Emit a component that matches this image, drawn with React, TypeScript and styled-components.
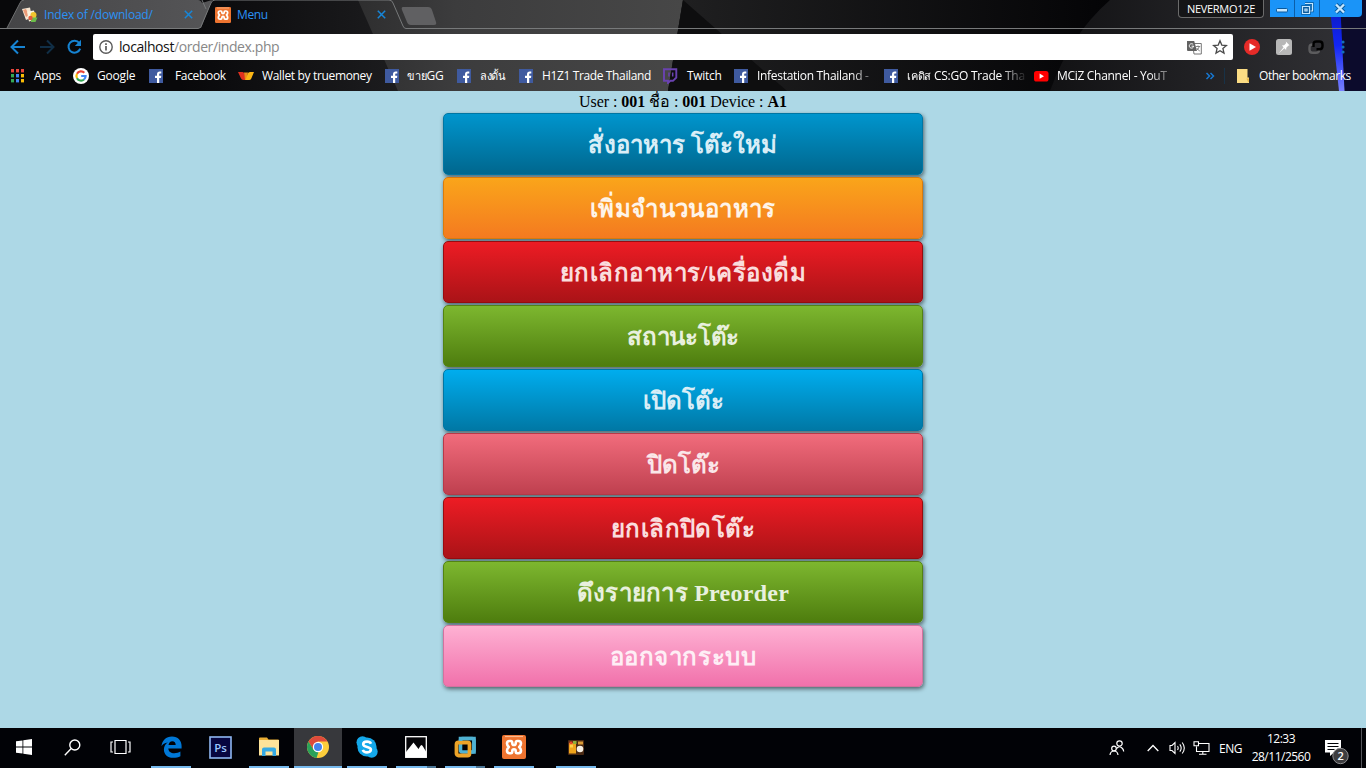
import React from "react";
import styled, { createGlobalStyle } from "styled-components";

const Global = createGlobalStyle`
  *, *::before, *::after { box-sizing: border-box; }
  body { margin: 0; background: #add8e6; overflow: hidden; }
`;

const UI = `"Open Sans", "Noto Sans", "Liberation Sans", sans-serif`;

const Screen = styled.div`
  width: 1366px;
  height: 768px;
  display: flex;
  flex-direction: column;
  overflow: hidden;
`;

/* ---------- browser frame ---------- */

const Browser = styled.header`
  position: relative;
  height: 91px;
  display: flex;
  flex-direction: column;
  background: #08080a;
  font-family: ${UI};
  font-size: 12px;
  color: #fff;
`;

const Backdrop = styled.svg`
  position: absolute;
  inset: 0;
`;

const TabStrip = styled.div`
  position: relative;
  height: 29px;
  display: flex;
`;

const Tab = styled.div<{ $w: number }>`
  width: ${(p) => p.$w}px;
  height: 29px;
  padding-left: 22px;
  display: flex;
  align-items: center;
  color: #2b92f5;
  & > svg:first-child { margin-right: 6px; }
`;

const TabTitle = styled.span<{ $ls?: number }>`
  flex: 1;
  line-height: 28px;
  white-space: nowrap;
  letter-spacing: ${(p) => p.$ls ?? 0}px;
`;

const WindowControls = styled.div`
  margin-left: auto;
  display: flex;
  align-items: flex-start;
  padding-right: 4px;
`;

const Profile = styled.div`
  width: 86px;
  height: 18px;
  margin-right: 6px;
  border: 1px solid #6b6b6b;
  border-top: 0;
  border-radius: 0 0 4px 4px;
  background: #151517;
  text-align: center;
  font-size: 11px;
  line-height: 18px;
  letter-spacing: -0.3px;
`;

const WindowButton = styled.div<{ $w: number }>`
  width: ${(p) => p.$w}px;
  height: 17px;
  display: flex;
  align-items: center;
  justify-content: center;
  background: #1a94f8;
  border-right: 1px solid #0b5ea8;
  &:last-child { border-right: 0; border-radius: 0 0 4px 0; }
`;

const Toolbar = styled.div`
  position: relative;
  height: 33px;
  display: flex;
  align-items: center;
  padding: 4px 8px 2px 9px;
`;

const NavIcon = styled.span<{ $w: number }>`
  width: ${(p) => p.$w}px;
  display: flex;
`;

const Omnibox = styled.div`
  width: 1140px;
  height: 26px;
  margin-top: 1px;
  padding: 0 5px;
  display: flex;
  align-items: center;
  background: #fff;
  border-radius: 2px;
  color: #888;
  font-size: 14px;
  & > svg:first-child { margin-right: 5px; }
`;

const Address = styled.span`
  flex: 1;
  line-height: 26px;
  letter-spacing: -0.41px;
  b { font-weight: 400; color: #111; }
`;

const Extensions = styled.div`
  flex: 1;
  padding-left: 11px;
  display: flex;
  align-items: center;
  gap: 16px;
`;

const BookmarkBar = styled.nav`
  position: relative;
  height: 28px;
  display: flex;
  align-items: center;
  padding-left: 10px;
`;

const Bookmark = styled.div<{ $w: number }>`
  width: ${(p) => p.$w}px;
  display: flex;
  align-items: center;
  flex: none;
`;

const BookmarkIcon = styled.span<{ $w: number }>`
  width: ${(p) => p.$w}px;
  height: 16px;
  flex: none;
`;

const BookmarkLabel = styled.span<{ $ls?: number; $fade?: number }>`
  white-space: nowrap;
  line-height: 28px;
  letter-spacing: ${(p) => p.$ls ?? 0}px;
  ${(p) =>
    p.$fade ? `mask-image: linear-gradient(90deg, #000 ${p.$fade - 26}px, rgba(0, 0, 0, 0.1) ${p.$fade}px);` : ""}
`;

const SmallThai = styled.span`
  font-size: 11px;
`;

/* ---------- page ---------- */

const Page = styled.main`
  height: 637px;
  background: #add8e6;
  display: flex;
  flex-direction: column;
  align-items: center;
  font-family: "Liberation Serif", serif;
`;

const UserLine = styled.div`
  height: 22px;
  line-height: 22px;
  font-size: 16px;
  letter-spacing: -0.05px;
  color: #000;
  white-space: nowrap;
`;

const Menu = styled.div`
  display: flex;
  flex-direction: column;
  gap: 2px;
`;

const MenuButton = styled.div<{ $from: string; $to: string; $edge: string; $text: string }>`
  width: 480px;
  height: 62px;
  padding-top: 2px;
  display: flex;
  align-items: center;
  justify-content: center;
  border: 1px solid ${(p) => p.$edge};
  border-radius: 5px;
  background: linear-gradient(${(p) => p.$from}, ${(p) => p.$to});
  box-shadow: 1px 2px 4px rgba(0, 0, 0, 0.55);
  color: ${(p) => p.$text};
`;

const MenuLabel = styled.span<{ $ls: number }>`
  font-size: 24px;
  font-weight: 700;
  line-height: 58px;
  letter-spacing: ${(p) => p.$ls}px;
  white-space: nowrap;
`;

/* ---------- taskbar ---------- */

const Taskbar = styled.footer`
  height: 40px;
  display: flex;
  background: #010206;
  font-family: ${UI};
  font-size: 12px;
  color: #fff;
`;

const Task = styled.div<{ $w?: number; $open?: boolean; $active?: boolean; $stack?: boolean; $ml?: number }>`
  width: ${(p) => p.$w ?? 49}px;
  margin-left: ${(p) => p.$ml ?? 0}px;
  height: 40px;
  padding-right: ${(p) => (p.$w ? 0 : 1)}px;
  display: grid;
  grid-template-rows: 38px 2px;
  justify-items: center;
  align-items: center;
  background: ${(p) => (p.$active ? "linear-gradient(90deg, #37383c 48px, transparent 48px)" : "none")};
  &::after {
    content: "";
    width: ${(p) => (p.$active ? 48 : 40)}px;
    height: 2px;
    background: ${(p) =>
      !p.$open ? "none" : p.$stack ? "linear-gradient(90deg, #76b9ed 31px, #4b7595 31px)" : "#76b9ed"};
  }
`;

const Tray = styled.div`
  margin-left: auto;
  display: flex;
  align-items: center;
`;

const TrayCell = styled.div<{ $w: number }>`
  width: ${(p) => p.$w}px;
  display: flex;
  justify-content: center;
  letter-spacing: -0.45px;
`;

const Clock = styled.div`
  width: 78px;
  text-align: center;
  line-height: 18px;
  letter-spacing: -0.5px;
  padding-bottom: 1px;
`;

const ShowDesktop = styled.div`
  width: 5px;
  height: 40px;
  border-left: 1px solid #53545a;
`;

/* ---------- icons ---------- */

const Xampp = ({ s }: { s: number }) => (
  <svg width={s} height={s} viewBox="0 0 24 24">
    <rect width="24" height="24" rx="2" fill="#ee7430" />
    <path d="M3 1.500h18" stroke="#fbb98c" strokeWidth="1.200" />
    <path
      d="M7.500 6H8.800Q10.300 6 10.300 8.200Q10.300 10 12 10Q13.700 10 13.700 8.200Q13.700 6 15.200 6H16.500Q19 6 19 8.600Q19 10.300 17.200 12Q19 13.700 19 15.600Q19 18.200 16.500 18.200H15.200Q13.700 18.200 13.700 16Q13.700 14.200 12 14.200Q10.300 14.200 10.300 16Q10.300 18.200 8.800 18.200H7.500Q5 18.200 5 15.600Q5 13.700 6.800 12Q5 10.300 5 8.600Q5 6 7.500 6z"
      fill="none"
      stroke="#fff"
      strokeWidth="2.600"
      strokeLinejoin="round"
    />
  </svg>
);

const Close = () => (
  <svg width="9" height="9" viewBox="0 0 9 9">
    <path d="M.8.8l7.4 7.4M8.2.8L.8 8.2" stroke="#1686d9" strokeWidth="1.5" />
  </svg>
);

const DownloadIcon = () => (
  <svg width="16" height="16" viewBox="0 0 16 16">
    <path d="M0 2l8-1.500 2 10-6 2.500z" fill="#f4e6d2" />
    <path d="M1 3l3-1 3 6-3 2z" fill="#ea9a78" />
    <path d="M5 4.500l7-1 2 9-7 2z" fill="#f8f2df" />
    <circle cx="11.500" cy="8" r="3" fill="#f0c52d" />
    <path d="M9 10.500h6.500l-2 4.500H9z" fill="#6cbc4a" />
    <circle cx="8.500" cy="11" r="2.200" fill="#e25a3c" />
  </svg>
);

const Facebook = () => (
  <svg width="14" height="14" viewBox="0 0 14 14" style={{ marginTop: 1 }}>
    <rect width="14" height="14" fill="#3f5a9f" />
    <path d="M8 14V9H6V6.800h2V5.200C8 3.300 9.100 2.400 10.700 2.400h1.600v2.100h-1.100c-.8 0-1 .4-1 1v1.300h2.100L12 9h-1.800v5z" fill="#fff" />
  </svg>
);

const AppsGrid = () => (
  <svg width="14" height="16" viewBox="0 0 14 16">
    {["#e8453c", "#e8453c", "#e8453c", "#34a853", "#4285f4", "#fbbc05", "#34a853", "#4285f4", "#fbbc05"].map((c, i) => (
      <rect key={i} x={1 + (i % 3) * 5} y={1 + Math.floor(i / 3) * 5} width="3" height="3.400" fill={c} />
    ))}
  </svg>
);

const Google = () => (
  <svg width="16" height="16" viewBox="0 0 16 16">
    <circle cx="8" cy="8" r="8" fill="#fff" />
    <g fill="none" strokeWidth="2.200">
      <path d="M11.300 4.700A4.600 4.600 0 0 0 4 5.800" stroke="#ea4335" />
      <path d="M4 5.800a4.600 4.600 0 0 0 0 4.400" stroke="#fbbc05" />
      <path d="M4 10.200a4.600 4.600 0 0 0 7 1.300" stroke="#34a853" />
      <path d="M11 11.500A4.600 4.600 0 0 0 12.600 8H8.200" stroke="#4285f4" />
    </g>
  </svg>
);

const TrueMoney = () => (
  <svg width="16" height="16" viewBox="0 0 16 16">
    <path d="M0 4h4.500q1.500 0 2 2l1 6H5.500Q3.500 12 2.800 10z" fill="#e2301f" />
    <path d="M6 4.500h4L8.500 12H7z" fill="#f08a1b" />
    <path d="M7.500 12l2.300-6.500Q10.300 4 12 4h4l-2.700 6.500Q12.600 12 11 12z" fill="#fbb615" />
  </svg>
);

const Twitch = () => (
  <svg width="16" height="16" viewBox="0 0 16 16">
    <path d="M2 1.300h12.300v8.200L11 12.800H8.300L6 15v-2.200H2z" fill="none" stroke="#6a42b0" strokeWidth="1.900" />
    <path d="M7 4.500v4M10.700 4.500v4" stroke="#6a42b0" strokeWidth="1.500" />
  </svg>
);

const YouTube = () => (
  <svg width="15" height="16" viewBox="0 0 15 16">
    <rect y="3" width="14.500" height="10.500" rx="2.600" fill="#f00" />
    <path d="M5.600 5.600v5.200l4.400-2.600z" fill="#fff" />
  </svg>
);

const Note = () => (
  <svg width="12" height="16" viewBox="0 0 12 16">
    <path d="M0 1h10.500v8.500H12V15H0z" fill="#fbdc84" />
    <path d="M9.500 10.500h2.500V14H11z" fill="#e9b949" />
  </svg>
);

const Theme = () => (
  <Backdrop width="1366" height="91" viewBox="0 0 1366 91">
    <defs>
      <linearGradient id="dim" x1="0" x2="1">
        <stop offset="0" stopColor="#08080a" />
        <stop offset="1" stopColor="#1d1d1f" />
      </linearGradient>
      <linearGradient id="mid" x1="0" x2="1">
        <stop offset="0" stopColor="#2e2e2f" />
        <stop offset=".3" stopColor="#3c3c3d" />
        <stop offset="1" stopColor="#474747" />
      </linearGradient>
      <linearGradient id="right" x1="0" x2="1">
        <stop offset="0" stopColor="#202021" />
        <stop offset="1" stopColor="#040406" />
      </linearGradient>
      <linearGradient id="far" x1="0" x2="1">
        <stop offset="0" stopColor="#121214" />
        <stop offset="1" stopColor="#303034" />
      </linearGradient>
      <linearGradient id="tab" x1="0" x2="1">
        <stop offset="0" stopColor="#454547" />
        <stop offset="1" stopColor="#555557" />
      </linearGradient>
      <linearGradient id="beam" x1="0" x2="0" y1="0" y2="1">
        <stop offset="0" stopColor="#0a18b8" />
        <stop offset=".5" stopColor="#1226f4" />
        <stop offset="1" stopColor="#7880ff" />
      </linearGradient>
    </defs>
    <path d="M180 0H372L405 91H180z" fill="url(#dim)" />
    <path d="M358 0H683L668 91H398z" fill="url(#mid)" />
    <path d="M683 0H1110L1050 91H668z" fill="url(#right)" />
    <path d="M683 0L787 91H668z" fill="#0e0e0f" />
    <path d="M1110 0H1330L1345 91H1050Q1070 35 1110 0z" fill="url(#far)" />
    <path d="M1330 0H1366V91H1345z" fill="#0c0b2c" />
    <path d="M1329 0H1340L1344.500 91H1339z" fill="url(#beam)" />
    <path d="M7 28L20 3q1-3 4-3H198q3 0 4 3L212 0L201 28z" fill="url(#tab)" />
    <path d="M0 28.500H198q2 0 3-2L211 3q1-3 4-3H389q3 0 4 3L403 26q1 2.500 3 2.500H1366" fill="none" stroke="#77797a" />
    <path d="M7 28L20 3q1-3 4-3" fill="none" stroke="#6c6d6e" />
    <path d="M202 0L206 9" stroke="#77797a" />
    <path d="M403 7H428q3 0 4 3l4 12q1 3-2 3H411q-3 0-4-3L402 10q-1-3 1-3z" fill="#606062" />
  </Backdrop>
);

type Mark = { w: number; iw: number; icon: React.ReactNode; thai?: string; label: string; ls: number; fade?: number };
const bookmarks: Mark[] = [
  { w: 63, iw: 24, icon: <AppsGrid />, label: "Apps", ls: -0.25 },
  { w: 76, iw: 24, icon: <Google />, label: "Google", ls: -0.2 },
  { w: 89, iw: 26, icon: <Facebook />, label: "Facebook", ls: -0.33 },
  { w: 147, iw: 24, icon: <TrueMoney />, label: "Wallet by truemoney", ls: -0.34 },
  { w: 72, iw: 22, icon: <Facebook />, thai: "ขาย", label: "GG", ls: -0.2 },
  { w: 62, iw: 23, icon: <Facebook />, thai: "ลงดั้น", label: "", ls: -0.4 },
  { w: 143, iw: 23, icon: <Facebook />, label: "H1Z1 Trade Thailand", ls: -0.37 },
  { w: 72, iw: 25, icon: <Twitch />, label: "Twitch", ls: -0.3 },
  { w: 150, iw: 23, icon: <Facebook />, label: "Infestation Thailand -", ls: -0.3, fade: 120 },
  { w: 150, iw: 23, icon: <Facebook />, thai: "เคดิส", label: " CS:GO Trade Tha", ls: -0.24, fade: 118 },
  { w: 171, iw: 23, icon: <YouTube />, label: "MCiZ Channel - YouT", ls: -0.3, fade: 118 },
];

type Item = { label: string; from: string; to: string; edge: string; text: string; ls?: number };
const red = { from: "#ed1c24", to: "#aa1317", edge: "#980c10", text: "#fadddd" };
const green = { from: "#7db72f", to: "#4e7d0e", edge: "#538312", text: "#e8f0de" };
const items: Item[] = [
  { label: "สั่งอาหาร โต๊ะใหม่", from: "#0095cd", to: "#00678e", edge: "#0076a3", text: "#d9eef7", ls: 0.08 },
  { label: "เพิ่มจำนวนอาหาร", from: "#faa51a", to: "#f47a20", edge: "#da7c0c", text: "#fef4e9", ls: 0.4 },
  { label: "ยกเลิกอาหาร/เครื่องดื่ม", ...red, ls: 0.5 },
  { label: "สถานะโต๊ะ", ...green, ls: -0.25 },
  { label: "เปิดโต๊ะ", from: "#00adee", to: "#0078a5", edge: "#0076a3", text: "#d9eef7" },
  { label: "ปิดโต๊ะ", from: "#f16c7c", to: "#bf404f", edge: "#b73948", text: "#fae7e9" },
  { label: "ยกเลิกปิดโต๊ะ", ...red, ls: 0.45 },
  { label: "ดึงรายการ Preorder", ...green, ls: 0.25 },
  { label: "ออกจากระบบ", from: "#feb1d3", to: "#f171ab", edge: "#d2729e", text: "#feeef5", ls: 0.6 },
];

export default function App() {
  return (
    <Screen>
      <Global />
      <Browser>
        <Theme />
        <TabStrip>
          <Tab $w={193}>
            <DownloadIcon />
            <TabTitle $ls={-0.22}>Index of /download/</TabTitle>
            <Close />
          </Tab>
          <Tab $w={193}>
            <Xampp s={16} />
            <TabTitle $ls={-0.4}>Menu</TabTitle>
            <Close />
          </Tab>
          <WindowControls>
            <Profile>NEVERMO12E</Profile>
            <WindowButton $w={25}>
              <svg width="12" height="5" style={{ marginTop: 3 }}>
                <rect x=".5" y=".5" width="11" height="3.500" rx="1" fill="#c5e7ff" stroke="#08599c" />
              </svg>
            </WindowButton>
            <WindowButton $w={25}>
              <svg width="13" height="13" viewBox="0 0 13 13" fill="none">
                <path d="M4 1.500h7.500V9H9.500M1.500 4.500h7v7h-7zM4 7h2v2H4z" stroke="#08599c" strokeWidth="2.600" />
                <path d="M4 1.500h7.500V9H9.500M1.500 4.500h7v7h-7zM4 7h2v2H4z" stroke="#c5e7ff" strokeWidth="1.200" />
              </svg>
            </WindowButton>
            <WindowButton $w={42}>
              <svg width="12" height="11" viewBox="0 0 12 11" style={{ marginRight: 2 }}>
                <path d="M2 1.500l8 8M10 1.500l-8 8" stroke="#08599c" strokeWidth="4.200" />
                <path d="M2 1.500l8 8M10 1.500l-8 8" stroke="#c5e7ff" strokeWidth="2.400" />
              </svg>
            </WindowButton>
          </WindowControls>
        </TabStrip>

        <Toolbar>
          <NavIcon $w={29}>
            <svg width="18" height="16" viewBox="0 0 18 16" fill="none" stroke="#1683d2" strokeWidth="2">
              <path d="M16 8H3.500M9 1.500L2.500 8 9 14.500" />
            </svg>
          </NavIcon>
          <NavIcon $w={28}>
            <svg width="18" height="16" viewBox="0 0 18 16" fill="none" stroke="#102e46" strokeWidth="2">
              <path d="M2 8h12.500M9 1.500L15.500 8 9 14.500" />
            </svg>
          </NavIcon>
          <NavIcon $w={27}>
            <svg width="17" height="16" viewBox="0 0 17 16">
              <path d="M13.300 4A6 6 0 1 0 14.200 9.700" fill="none" stroke="#1683d2" strokeWidth="2" />
              <path d="M15 .8v6.200H8.800z" fill="#1683d2" />
            </svg>
          </NavIcon>
          <Omnibox>
            <svg width="16" height="16" viewBox="0 0 16 16">
              <circle cx="8" cy="8" r="6.200" fill="none" stroke="#5a5a5a" strokeWidth="1.400" />
              <path d="M8 7v4.500M8 4.300v1.700" stroke="#5a5a5a" strokeWidth="1.700" />
            </svg>
            <Address>
              <b>localhost</b>/order/index.php
            </Address>
            <svg width="15" height="15" viewBox="0 0 15 15" style={{ marginRight: 10 }}>
              <path d="M5.500 3.500h8.800v10.500H7z" fill="#fff" stroke="#777" />
              <path d="M0 1h7.200l2.800 10H1q-1 0-1-1z" fill="#626262" />
              <path d="M6.200 4.500A2.200 2.200 0 1 0 6.700 6.200H4.600" fill="none" stroke="#fff" />
              <path d="M8.800 6.500h4.400M11 5.500v1M12.300 6.500q-.6 2.500-3 4M9.800 8q1 2 3 3" fill="none" stroke="#777" strokeWidth=".9" />
            </svg>
            <svg width="16" height="16" viewBox="0 0 16 16">
              <path
                d="M8 1.800l1.800 4.300 4.600.4-3.500 3 1.100 4.600L8 11.700l-4 2.400 1.100-4.600-3.500-3 4.600-.4z"
                fill="none"
                stroke="#4a4a4a"
                strokeWidth="1.300"
              />
            </svg>
          </Omnibox>
          <Extensions>
            <svg width="16" height="16" viewBox="0 0 16 16">
              <circle cx="8" cy="8" r="8" fill="#e62b28" />
              <path d="M5.500 4.300v7.400L12 8z" fill="#fff" />
            </svg>
            <svg width="16" height="16" viewBox="0 0 16 16">
              <rect width="16" height="16" rx="2.500" fill="#b7b7b7" />
              <path d="M9.800 2.500l3.700 3.700-1.200.5-2 2-.2 2.200-1.700-1.700L3 14l4.600-5.800-1.700-1.700 2.200-.2 2-2z" fill="#fff" />
            </svg>
            <svg width="16" height="16" viewBox="0 0 16 16" fill="none" strokeWidth="2.400">
              <path d="M5 5.500H4.500Q1.500 5.500 1.500 8.500V10.500Q1.500 13.800 4.500 13.800H8Q11 13.800 11 11" stroke="#5c5c5e" />
              <path d="M5.500 8V5.500q0-3 3-3h3q3 0 3 3v1.700q0 3-3 3H8.500" stroke="#000" />
            </svg>
            <svg width="4" height="14" viewBox="0 0 4 14" style={{ marginLeft: 1 }}>
              {[2, 7, 12].map((y) => (
                <circle key={y} cx="2" cy={y} r="1.600" fill="#1470b8" />
              ))}
            </svg>
          </Extensions>
        </Toolbar>

        <BookmarkBar>
          {bookmarks.map((b) => (
            <Bookmark key={b.label} $w={b.w}>
              <BookmarkIcon $w={b.iw}>{b.icon}</BookmarkIcon>
              <BookmarkLabel $ls={b.ls} $fade={b.fade}>
                {b.thai && <SmallThai>{b.thai}</SmallThai>}
                {b.label}
              </BookmarkLabel>
            </Bookmark>
          ))}
          <svg width="32" height="20" viewBox="0 0 32 20">
            <path d="M1.500 7l3 3-3 3M5.500 7l3 3-3 3" fill="none" stroke="#1777d0" strokeWidth="1.500" />
            <path d="M19.500 2v16" stroke="#183247" />
          </svg>
          <Bookmark $w={120}>
            <BookmarkIcon $w={22}>
              <Note />
            </BookmarkIcon>
            <BookmarkLabel $ls={-0.45}>Other bookmarks</BookmarkLabel>
          </Bookmark>
        </BookmarkBar>
      </Browser>

      <Page>
        <UserLine>
          User : <b>001</b> ชื่อ : <b>001</b> Device : <b>A1</b>
        </UserLine>
        <Menu>
          {items.map((m) => (
            <MenuButton key={m.label} $from={m.from} $to={m.to} $edge={m.edge} $text={m.text}>
              <MenuLabel $ls={m.ls ?? 0}>{m.label}</MenuLabel>
            </MenuButton>
          ))}
        </Menu>
      </Page>

      <Taskbar>
        <Task $w={48}>
          <svg width="16" height="16" viewBox="0 0 16 16" fill="#fff">
            <path d="M0 2.300l6.500-.9v6.200H0zM7.300 1.300L16 0v7.600H7.300zM0 8.400h6.500v6.200L0 13.700zM7.300 8.400H16V16l-8.700-1.300z" />
          </svg>
        </Task>
        <Task $w={48}>
          <svg width="17" height="17" viewBox="0 0 17 17" fill="none" stroke="#fff" strokeWidth="1.400">
            <circle cx="10.800" cy="6" r="5" />
            <path d="M7.200 9.600L.8 16.200" />
          </svg>
        </Task>
        <Task $w={51}>
          <svg width="21" height="16" viewBox="0 0 21 16" fill="none" stroke="#fff" strokeWidth="1.200" style={{ marginRight: 3 }}>
            <path d="M5 1.500h11v13H5zM3 3H1v10h2M18 3h2v10h-2" />
          </svg>
        </Task>
        <Task $open>
          <svg width="21" height="22" viewBox="0 0 21 22">
            <path
              d="M.5 10.200C1 4.500 5 .4 11 .4c6 0 9.600 4.200 9.600 9.600v2.600H7.300c.2 3.200 2.600 4.700 6 4.700 2.400 0 4.300-.6 6.100-1.700v4.600c-2 1-4.400 1.600-7.300 1.600-5.800 0-9.200-3.400-9.200-8.300 0-3 1.300-5.700 3.900-7.100C3.800 6.800 1.700 8 .5 10.200zM7.500 9h7.200c0-2.400-1.200-3.800-3.400-3.800C9.200 5.200 8 6.600 7.500 9z"
              fill="#0078d7"
            />
          </svg>
        </Task>
        <Task>
          <svg width="23" height="23" viewBox="0 0 23 23">
            <rect x="1" y="1" width="21" height="21" fill="#070640" stroke="#8fb7f2" strokeWidth="1.600" />
            <text x="11.500" y="15.500" textAnchor="middle" fontFamily="Open Sans" fontWeight="600" fontSize="11.500" fill="#9cc6ff">
              Ps
            </text>
          </svg>
        </Task>
        <Task $open>
          <svg width="22" height="20" viewBox="0 0 22 20">
            <path d="M1 1.500q0-1 1-1h7l1.500 2H20q1 0 1 1V18H1z" fill="#e9ae35" />
            <path d="M1 3h20v15.500H1z" fill="#fde39a" />
            <path d="M4 19v-6.500q0-2 2-2h10q2 0 2 2V19h-3.500v-4.500h-7V19z" fill="#35a9e3" />
          </svg>
        </Task>
        <Task $open $active>
          <svg width="22" height="22" viewBox="0 0 22 22">
            <circle cx="11" cy="11" r="11" fill="#fccd3b" />
            <path d="M1.500 5.500A11 11 0 0 1 20.500 5.500H11L6.300 13.700z" fill="#de4a3c" />
            <path d="M1.470 5.500L6.500 13.700 11.500 16l-2 5.900A11 11 0 0 1 1.470 5.500z" fill="#2aa15a" />
            <circle cx="11" cy="11" r="5.200" fill="#fff" />
            <circle cx="11" cy="11" r="4" fill="#4583ee" />
          </svg>
        </Task>
        <Task $open>
          <svg width="22" height="22" viewBox="0 0 22 22">
            <circle cx="11" cy="11" r="9.600" fill="#14a8ea" />
            <circle cx="6.500" cy="6.300" r="6" fill="#14a8ea" />
            <circle cx="15.700" cy="15.700" r="6" fill="#14a8ea" />
            <path
              d="M15 7.700C14.300 6.200 12.900 5.600 11 5.600c-2.300 0-3.800 1-3.800 2.600 0 3.800 7.700 1.700 7.700 5.400 0 1.700-1.600 2.800-3.900 2.800-2.200 0-3.600-.8-4.200-2.500"
              fill="none"
              stroke="#fff"
              strokeWidth="2.600"
            />
          </svg>
        </Task>
        <Task $open $stack>
          <svg width="22" height="22" viewBox="0 0 22 22">
            <rect x=".7" y=".7" width="20.600" height="20.600" fill="#050508" stroke="#fff" strokeWidth="1.300" />
            <path d="M1 16l7.500-9.500 5 6.500 1.500-2.500q1.500-3 3 0l3 5V21H1z" fill="#fff" />
          </svg>
        </Task>
        <Task $open $stack>
          <svg width="22" height="22" viewBox="0 0 22 22" fill="none">
            <rect x="6.500" y="2.500" width="13.500" height="13.500" rx="2" stroke="#4fb2d3" strokeWidth="3.600" />
            <rect x="2.500" y="6.500" width="13" height="13" rx="2" stroke="#eda428" strokeWidth="3.800" />
            <path d="M6.500 5v-2.500h13.500v13.500h-2.500" stroke="#4fb2d3" strokeWidth="3.600" />
          </svg>
        </Task>
        <Task $open>
          <Xampp s={24} />
        </Task>
        <Task $open $ml={13}>
          <svg width="16" height="15" viewBox="0 0 16 15">
            <rect width="16" height="15" rx="1" fill="#4a2a14" />
            <rect x="1" y="3" width="7" height="10.500" fill="#f0a51c" />
            <rect x="1.500" y="1.500" width="3" height="3" fill="#e8452a" />
            <rect x="5" y="1" width="3.500" height="3" fill="#8fb13a" />
            <rect x="2" y="4.500" width="3" height="3" fill="#ffd34a" />
            <circle cx="12" cy="9" r="3.300" fill="#f5efe4" />
            <rect x="10" y="1.500" width="5" height="3" fill="#d99a36" />
          </svg>
        </Task>

        <Tray>
          <TrayCell $w={36}>
            <svg width="16" height="16" viewBox="0 0 16 16" fill="none" stroke="#fff" strokeWidth="1.200">
              <circle cx="10.500" cy="3.500" r="2.700" />
              <path d="M7.500 8.500q3-3.500 6 0 1 1.200 1.200 3" />
              <circle cx="5" cy="8.500" r="2.300" />
              <path d="M1 15q.5-4 4-4t4 4" />
            </svg>
          </TrayCell>
          <TrayCell $w={36}>
            <svg width="12" height="8" viewBox="0 0 12 8">
              <path d="M.7 7L6 1.500 11.300 7" fill="none" stroke="#fff" strokeWidth="1.300" />
            </svg>
          </TrayCell>
          <TrayCell $w={12}>
            <svg width="17" height="14" viewBox="0 0 17 14" fill="none" stroke="#fff" strokeWidth="1.100" style={{ flex: "none" }}>
              <path d="M1 4.500h2l3-3v11l-3-3H1zM8.500 5q1.400 2 0 4M10.800 3.300q2.800 3.700 0 7.400M13.200 1.500q4.200 5.500 0 11" />
            </svg>
          </TrayCell>
          <TrayCell $w={36}>
            <svg width="17" height="14" viewBox="0 0 17 14" fill="none" stroke="#fff" strokeWidth="1.100">
              <path d="M5.500 2.500h10.500v8H3.500V5.500M1 .8h4.500v4H1zM9.800 10.500v3M6 13.300h7.500" />
            </svg>
          </TrayCell>
          <TrayCell $w={23}>ENG</TrayCell>
          <Clock>
            12:33
            <br />
            28/11/2560
          </Clock>
          <TrayCell $w={41}>
            <svg width="25" height="26" viewBox="0 0 25 26" style={{ marginTop: 7, marginRight: 8 }}>
              <path d="M1 1h16v12.500H10L6 17v-3.500H1z" fill="#fff" />
              <path d="M3.500 4.500h11M3.500 7.500h11M3.500 10.500h7" stroke="#010206" strokeWidth="1.100" />
              <circle cx="16.500" cy="17" r="7.700" fill="#3d3d40" stroke="#8c8c8e" />
              <text x="16.500" y="21" textAnchor="middle" fontFamily="Open Sans" fontSize="11" fontWeight="600" fill="#fff">
                2
              </text>
            </svg>
          </TrayCell>
          <ShowDesktop />
        </Tray>
      </Taskbar>
    </Screen>
  );
}
